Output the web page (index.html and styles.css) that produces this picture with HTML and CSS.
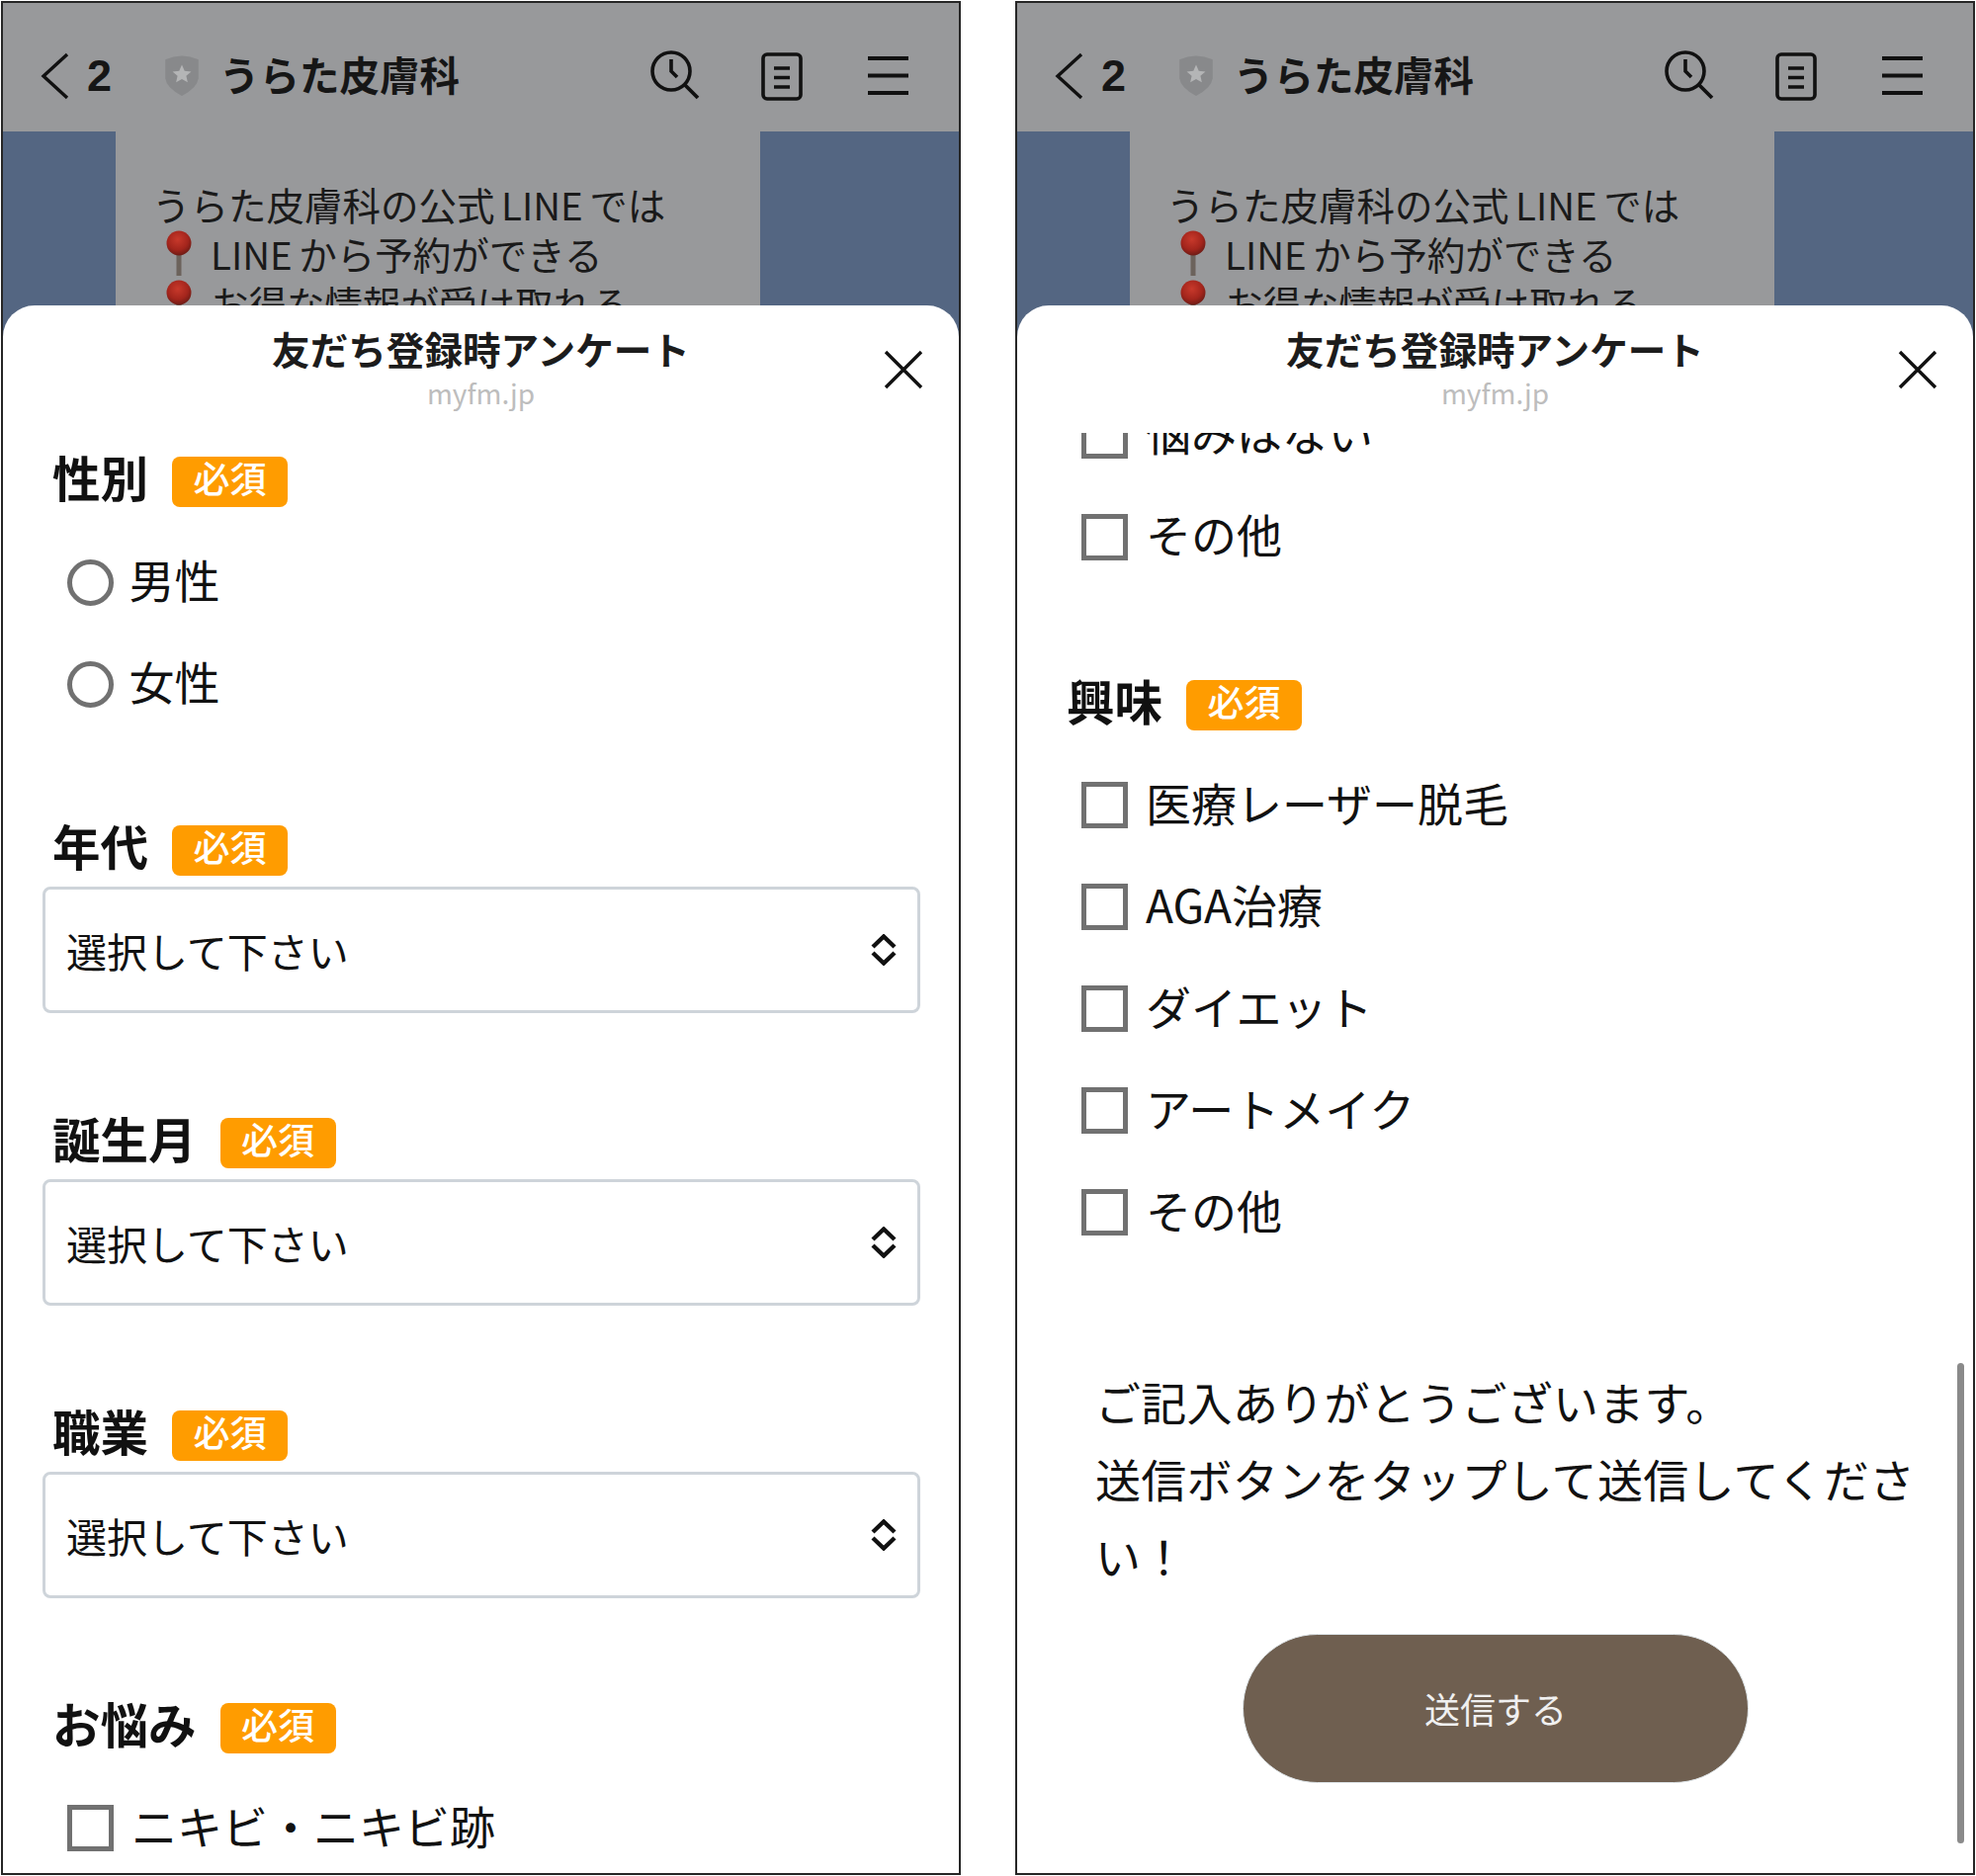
FILE: index.html
```html
<!DOCTYPE html>
<html lang="ja">
<head>
<meta charset="utf-8">
<title>友だち登録時アンケート</title>
<link rel="stylesheet" href="styles.css">
</head>
<body>
<svg class="defs" aria-hidden="true">
  <defs>
    <radialGradient id="ball" cx="45%" cy="35%" r="65%">
      <stop offset="0" stop-color="#c8392b"/>
      <stop offset="0.65" stop-color="#a3251c"/>
      <stop offset="1" stop-color="#6e1c16"/>
    </radialGradient>
    <symbol id="i-back" viewBox="0 0 32 50"><path d="M27 2 L3 24 L27 46" fill="none" stroke="#111" stroke-width="3.4"/></symbol>
    <symbol id="i-shield" viewBox="0 0 36 42">
      <path d="M2 6 Q18 -1 34 6 L34 24 Q33 33 18 41 Q3 33 2 24 Z" fill="#88898b"/>
      <path d="M18 11 L20.6 17 L27 17.6 L22.2 21.8 L23.6 28 L18 24.8 L12.4 28 L13.8 21.8 L9 17.6 L15.4 17 Z" fill="#b4b5b6"/>
    </symbol>
    <symbol id="i-search" viewBox="0 0 56 56">
      <circle cx="25" cy="23" r="19" fill="none" stroke="#111" stroke-width="3.6"/>
      <path d="M25 11 L25 23 L31 29" fill="none" stroke="#111" stroke-width="3.6"/>
      <path d="M39 37 L52 50" fill="none" stroke="#111" stroke-width="3.8"/>
    </symbol>
    <symbol id="i-doc" viewBox="0 0 44 50">
      <rect x="3" y="2" width="38" height="45" rx="4" fill="none" stroke="#111" stroke-width="3.6"/>
      <path d="M14 16 H30 M14 25.500 H30 M14 35 H30" stroke="#111" stroke-width="3.6"/>
    </symbol>
    <symbol id="i-menu" viewBox="0 0 45 44"><path d="M2 4 H43 M2 21.500 H43 M2 39 H43" stroke="#111" stroke-width="3.8"/></symbol>
    <symbol id="i-pin" viewBox="0 0 26 46">
      <rect x="10.500" y="20" width="5" height="26" fill="#6c635c"/>
      <circle cx="13" cy="13" r="12.500" fill="url(#ball)"/>
    </symbol>
    <symbol id="i-close" viewBox="0 0 40 40"><path d="M2 2 L38 38 M38 2 L2 38" stroke="#111" stroke-width="3.4"/></symbol>
    <symbol id="i-updown" viewBox="0 0 28 32">
      <path d="M3 13 L14 2.500 L25 13 M3 19 L14 29.500 L25 19" fill="none" stroke="#111" stroke-width="4.4"/>
    </symbol>
  </defs>
</svg>

<main class="page">

  <section class="phone">
    <header class="topbar">
      <svg class="ic-back"><use href="#i-back"/></svg>
      <span class="count">2</span>
      <svg class="ic-shield"><use href="#i-shield"/></svg>
      <span class="name">うらた皮膚科</span>
      <svg class="ic-search"><use href="#i-search"/></svg>
      <svg class="ic-doc"><use href="#i-doc"/></svg>
      <svg class="ic-menu"><use href="#i-menu"/></svg>
    </header>
    <div class="chat">
      <div class="bubble">
        <p class="bubble-line">うらた皮膚科の公式<span class="latin">LINE</span>では</p>
        <p class="bubble-line"><svg class="ic-pin"><use href="#i-pin"/></svg><span class="latin">LINE</span>から予約ができる</p>
        <p class="bubble-line"><svg class="ic-pin"><use href="#i-pin"/></svg>お得な情報が受け取れる</p>
      </div>
    </div>
    <div class="sheet">
      <div class="sheet-head">
        <h1 class="sheet-title">友だち登録時アンケート</h1>
        <p class="sheet-host">myfm.jp</p>
        <svg class="ic-close"><use href="#i-close"/></svg>
      </div>
      <form class="form">
        <div class="group group-options">
          <div class="field-label"><span class="label-text">性別</span><span class="badge">必須</span></div>
          <div class="options">
            <div class="option"><span class="radio"></span><span class="option-text">男性</span></div>
            <div class="option"><span class="radio"></span><span class="option-text">女性</span></div>
          </div>
        </div>
        <div class="group group-select">
          <div class="field-label"><span class="label-text">年代</span><span class="badge">必須</span></div>
          <div class="select"><span>選択して下さい</span><svg class="ic-updown"><use href="#i-updown"/></svg></div>
        </div>
        <div class="group group-select">
          <div class="field-label"><span class="label-text">誕生月</span><span class="badge">必須</span></div>
          <div class="select"><span>選択して下さい</span><svg class="ic-updown"><use href="#i-updown"/></svg></div>
        </div>
        <div class="group group-select">
          <div class="field-label"><span class="label-text">職業</span><span class="badge">必須</span></div>
          <div class="select"><span>選択して下さい</span><svg class="ic-updown"><use href="#i-updown"/></svg></div>
        </div>
        <div class="group group-options">
          <div class="field-label"><span class="label-text">お悩み</span><span class="badge">必須</span></div>
          <div class="options">
            <div class="option"><span class="check"></span><span class="option-text">ニキビ・ニキビ跡</span></div>
          </div>
        </div>
      </form>
    </div>
  </section>

  <section class="phone">
    <header class="topbar">
      <svg class="ic-back"><use href="#i-back"/></svg>
      <span class="count">2</span>
      <svg class="ic-shield"><use href="#i-shield"/></svg>
      <span class="name">うらた皮膚科</span>
      <svg class="ic-search"><use href="#i-search"/></svg>
      <svg class="ic-doc"><use href="#i-doc"/></svg>
      <svg class="ic-menu"><use href="#i-menu"/></svg>
    </header>
    <div class="chat">
      <div class="bubble">
        <p class="bubble-line">うらた皮膚科の公式<span class="latin">LINE</span>では</p>
        <p class="bubble-line"><svg class="ic-pin"><use href="#i-pin"/></svg><span class="latin">LINE</span>から予約ができる</p>
        <p class="bubble-line"><svg class="ic-pin"><use href="#i-pin"/></svg>お得な情報が受け取れる</p>
      </div>
    </div>
    <div class="sheet">
      <div class="sheet-head">
        <h1 class="sheet-title">友だち登録時アンケート</h1>
        <p class="sheet-host">myfm.jp</p>
        <svg class="ic-close"><use href="#i-close"/></svg>
      </div>
      <form class="form form-scrolled">
        <div class="group group-options">
          <div class="options">
            <div class="option"><span class="check"></span><span class="option-text">悩みはない</span></div>
            <div class="option"><span class="check"></span><span class="option-text">その他</span></div>
          </div>
        </div>
        <div class="group group-options">
          <div class="field-label"><span class="label-text">興味</span><span class="badge">必須</span></div>
          <div class="options">
            <div class="option"><span class="check"></span><span class="option-text">医療レーザー脱毛</span></div>
            <div class="option"><span class="check"></span><span class="option-text">AGA治療</span></div>
            <div class="option"><span class="check"></span><span class="option-text">ダイエット</span></div>
            <div class="option"><span class="check"></span><span class="option-text">アートメイク</span></div>
            <div class="option"><span class="check"></span><span class="option-text">その他</span></div>
          </div>
        </div>
        <p class="thanks">ご記入ありがとうございます。<br>送信ボタンをタップして送信してください！</p>
        <button class="submit" type="button">送信する</button>
      </form>
      <div class="scrollbar"></div>
    </div>
  </section>

</main>
</body>
</html>
```

FILE: styles.css
```css
* { box-sizing: border-box; }

html, body { margin: 0; padding: 0; background: #fff; }

body {
  font-family: "Noto Sans CJK JP", "Noto Sans", sans-serif;
  color: #111;
}

.defs { position: absolute; width: 0; height: 0; }

.page {
  display: flex;
  gap: 55px;
  padding: 1px 0 0 1px;
}

.phone {
  width: 971px;
  height: 1896px;
  border: 2px solid #262626;
  display: flex;
  flex-direction: column;
  overflow: hidden;
  background: #fff;
}

/* top bar */
.topbar {
  height: 130px;
  flex: none;
  background: #98999b;
  display: flex;
  align-items: center;
  padding: 19px 49px 0 38px;
}

.ic-back { width: 32px; height: 50px; margin-right: 15px; }
.count { font-family: "Liberation Sans", sans-serif; font-weight: 700; font-size: 45px; width: 25px; margin-right: 52px; color: #161616; margin-top: -2px; }
.ic-shield { width: 38px; height: 44px; margin-right: 19px; margin-top: -4px; }
.name { font-size: 40.500px; font-weight: 700; line-height: 50px; color: #161616; margin-top: -5px; }
.ic-search { width: 56px; height: 56px; margin-left: auto; margin-right: 59px; margin-top: -2px; }
.ic-doc { width: 44px; height: 50px; margin-right: 63px; }
.ic-menu { width: 45px; height: 44px; margin-top: -1px; }

/* chat behind the sheet */
.chat {
  height: 210px;
  flex: none;
  background: #546682;
  padding-left: 114px;
}

.bubble {
  width: 652px;
  height: 100%;
  background: #98999b;
  padding: 47.500px 0 0 37px;
  font-size: 38.500px;
  color: #1a1a1a;
}

.bubble-line {
  margin: 0;
  height: 50px;
  line-height: 50px;
  display: flex;
  align-items: center;
  white-space: nowrap;
}

.latin { margin: 0 6.500px; }
.ic-pin + .latin { margin-left: 0; }

.ic-pin { width: 26px; height: 46px; margin: 0 19px 0 14px; flex: none; }

/* sheet */
.sheet {
  position: relative;
  flex: 1;
  min-height: 0;
  margin-top: -34px;
  background: #fff;
  border-radius: 32px 32px 0 0;
  display: flex;
  flex-direction: column;
  overflow: hidden;
}

.sheet-head {
  position: relative;
  height: 129px;
  flex: none;
  padding-top: 18px;
  text-align: center;
}

.sheet-title {
  margin: 0;
  font-size: 38.600px;
  font-weight: 700;
  line-height: 50px;
  color: #1c1c1c;
}

.sheet-host {
  margin: 0;
  font-size: 28px;
  line-height: 40px;
  color: #bdbdbd;
}

.ic-close {
  position: absolute;
  top: 45px;
  right: 36px;
  width: 40px;
  height: 40px;
}

.form {
  flex: 1;
  min-height: 0;
  overflow: hidden;
  padding: 24px 39px 0 40px;
}

.form-scrolled { padding-top: 0; }

.form-scrolled .group:first-child { margin-top: -73.500px; margin-bottom: 92.500px; }

.group-select { margin-bottom: 106px; }
.group-options { margin-bottom: 91px; }

.field-label {
  display: flex;
  align-items: center;
  height: 51px;
  padding-left: 10px;
}

.label-text {
  font-size: 48.500px;
  font-weight: 700;
  line-height: 51px;
  margin-top: -10px;
  color: #111;
}

.badge {
  margin-left: 24px;
  width: 117px;
  height: 51px;
  border-radius: 8px;
  background: #ff9c00;
  color: #fff;
  font-size: 37px;
  font-weight: 500;
  line-height: 43px;
  text-align: center;
}

.options { margin-top: 25px; }

.option {
  height: 103px;
  display: flex;
  align-items: center;
  gap: 18px;
  padding-left: 25px;
  font-size: 46px;
  line-height: 60px;
  color: #111;
}

.option-text { margin-top: -10px; }

.radio,
.check {
  width: 47px;
  height: 47px;
  flex: none;
  border: 5px solid #717171;
  background: #fff;
}

.check { margin-top: -2px; }

.radio { border-radius: 50%; margin-right: -2.500px; }

.select {
  margin-top: 11px;
  height: 128px;
  border: 3px solid #ced4da;
  border-radius: 8px;
  display: flex;
  align-items: center;
  justify-content: space-between;
  padding: 0 20px 0 21px;
  font-size: 41px;
  color: #111;
}

.ic-updown { width: 28px; height: 32px; }

.thanks {
  margin: 98.500px 0 0 39px;
  width: 866px;
  font-size: 46px;
  letter-spacing: 0.300px;
  line-height: 78px;
  color: #111;
}

.submit {
  display: block;
  margin: 41px auto 0;
  width: 512px;
  height: 151px;
  border: 1px solid #dfe6ea;
  border-radius: 76px;
  background: #6f5f50;
  color: #f0f0f0;
  font-family: inherit;
  font-size: 36px;
  padding: 0;
}

.scrollbar {
  position: absolute;
  right: 9px;
  top: 1070px;
  width: 7px;
  height: 486px;
  border-radius: 4px;
  background: #8a8a8a;
}
```
